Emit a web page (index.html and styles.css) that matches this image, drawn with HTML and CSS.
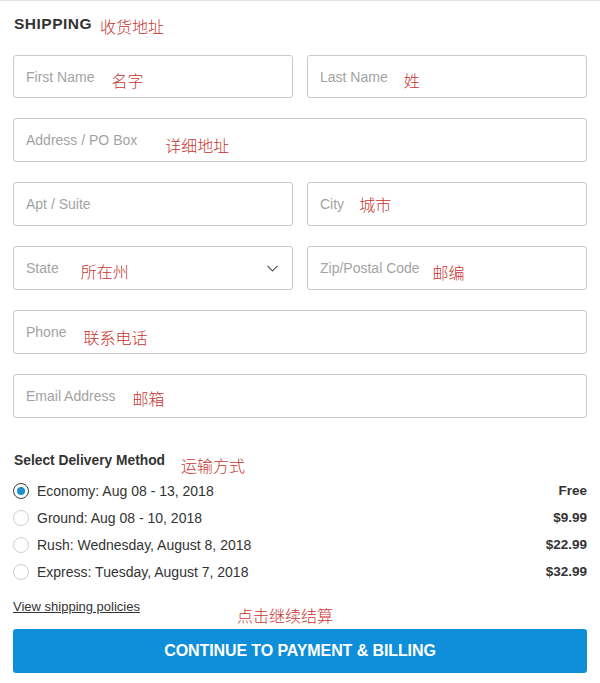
FILE: index.html
```html
<!DOCTYPE html>
<html lang="en">
<head>
<meta charset="utf-8">
<title>Shipping</title>
<link rel="stylesheet" href="styles.css">
</head>
<body>
<div class="page">
  <div class="title-row">
    <h2 class="title">SHIPPING</h2>
    <span class="note note-title">收货地址</span>
  </div>

  <div class="fields">
    <div class="field"><span class="ph">First Name</span><span class="note n-g17">名字</span></div>
    <div class="field"><span class="ph">Last Name</span><span class="note n-g16">姓</span></div>
    <div class="field wide"><span class="ph">Address / PO Box</span><span class="note n-g28 n-low">详细地址</span></div>
    <div class="field"><span class="ph">Apt / Suite</span></div>
    <div class="field"><span class="ph">City</span><span class="note n-g15 n-flat">城市</span></div>
    <div class="field select"><span class="ph">State</span><span class="note n-g22 n-mid">所在州</span>
      <svg class="chev" width="11" height="7" viewBox="0 0 11 7"><path d="M0.5 0.8 L5.5 5.8 L10.5 0.8" fill="none" stroke="#555" stroke-width="1.2"/></svg>
    </div>
    <div class="field"><span class="ph">Zip/Postal Code</span><span class="note n-g13">邮编</span></div>
    <div class="field wide"><span class="ph">Phone</span><span class="note n-g17 n-low">联系电话</span></div>
    <div class="field wide"><span class="ph">Email Address</span><span class="note n-g17 n-small">邮箱</span></div>
  </div>

  <div class="delivery-head">
    <h3 class="delivery-title">Select Delivery Method</h3>
    <span class="note n-g16 n-head">运输方式</span>
  </div>

  <ul class="methods">
    <li class="method"><span class="radio checked"></span><span class="m-label">Economy: Aug 08 - 13, 2018</span><span class="price">Free</span></li>
    <li class="method"><span class="radio"></span><span class="m-label">Ground: Aug 08 - 10, 2018</span><span class="price">$9.99</span></li>
    <li class="method"><span class="radio"></span><span class="m-label">Rush: Wednesday, August 8, 2018</span><span class="price">$22.99</span></li>
    <li class="method"><span class="radio"></span><span class="m-label">Express: Tuesday, August 7, 2018</span><span class="price">$32.99</span></li>
  </ul>

  <div class="policy-row">
    <a class="policy" href="#">View shipping policies</a>
    <span class="note note-cta">点击继续结算</span>
  </div>

  <button class="cta">CONTINUE TO PAYMENT &amp; BILLING</button>
</div>
</body>
</html>
```

FILE: styles.css
```css
* { box-sizing: border-box; }
html, body { margin: 0; padding: 0; background: #fff; }
body {
  font-family: "Liberation Sans", Arial, "Noto Sans CJK SC", sans-serif;
  color: #333;
}
.page {
  border-top: 1px solid #e4e4e4;
  padding: 12px 13px 0;
  width: 600px;
}
.title-row {
  display: flex;
  align-items: center;
  height: 22px;
  margin-bottom: 20px;
}
.title {
  margin: 0;
  font-size: 15.5px;
  font-weight: bold;
  letter-spacing: 0.5px;
  color: #333;
  padding-left: 1px;
}
.note {
  font-family: "Noto Sans CJK SC", sans-serif;
  font-size: 16px;
  line-height: 16px;
  color: #c8342f;
  font-weight: 300;
  white-space: nowrap;
}
.note-title { margin-left: 8px; padding-top: 3px; }

.fields {
  display: grid;
  grid-template-columns: 1fr 1fr;
  grid-template-rows: 43px;
  grid-auto-rows: 44px;
  column-gap: 14px;
  row-gap: 20px;
}
.field {
  border: 1px solid #cacaca;
  border-radius: 3px;
  display: flex;
  align-items: center;
  padding: 0 14px 0 12px;
  background: #fff;
}
.field.wide { grid-column: 1 / 3; }
.ph {
  font-size: 14px;
  color: #a3a3a3;
  white-space: nowrap;
}
.field .note { padding-top: 7px; }
.field .note.n-low { padding-top: 9px; }
.field .note.n-mid { padding-top: 5px; }
.field .note.n-small { padding-top: 3px; }
.field .note.n-flat { padding-top: 0; }
.n-g13 { margin-left: 13px; }
.n-g15 { margin-left: 15px; }
.n-g16 { margin-left: 16px; }
.n-g17 { margin-left: 17px; }
.n-g22 { margin-left: 22px; }
.n-g28 { margin-left: 28px; }
.chev { margin-left: auto; display: block; }

.delivery-head {
  display: flex;
  align-items: center;
  margin-top: 34px;
  height: 16px;
}
.delivery-title {
  margin: 0;
  font-size: 13.8px;
  font-weight: bold;
  color: #333;
  padding-left: 1px;
}
.n-head { padding-top: 10px; }

.methods {
  list-style: none;
  margin: 9px 0 0;
  padding: 0;
}
.method {
  display: flex;
  align-items: center;
  height: 27px;
}
.radio {
  width: 16px;
  height: 16px;
  border-radius: 50%;
  border: 1px solid #cfcfcf;
  margin-right: 8px;
  flex: none;
  display: flex;
  align-items: center;
  justify-content: center;
}
.radio.checked { border: 1.5px solid #3a3a3a; }
.radio.checked::after {
  content: "";
  width: 8px;
  height: 8px;
  border-radius: 50%;
  background: #1b8fd2;
}
.m-label { font-size: 14px; color: #333; }
.price {
  margin-left: auto;
  font-size: 13.5px;
  font-weight: bold;
  color: #333;
}

.policy-row {
  display: flex;
  align-items: flex-start;
  margin-top: 14px;
  height: 25px;
}
.policy {
  font-size: 13px;
  line-height: 16px;
  color: #333;
  text-decoration: underline;
}
.note-cta { margin-left: 97px; padding-top: 8px; }

.cta {
  display: block;
  width: 100%;
  height: 44px;
  margin-top: 5px;
  border: none;
  border-radius: 3px;
  background: #0f8fd9;
  color: #fff;
  font-family: "Liberation Sans", Arial, sans-serif;
  font-size: 16px;
  font-weight: bold;
  letter-spacing: -0.1px;
}
```
